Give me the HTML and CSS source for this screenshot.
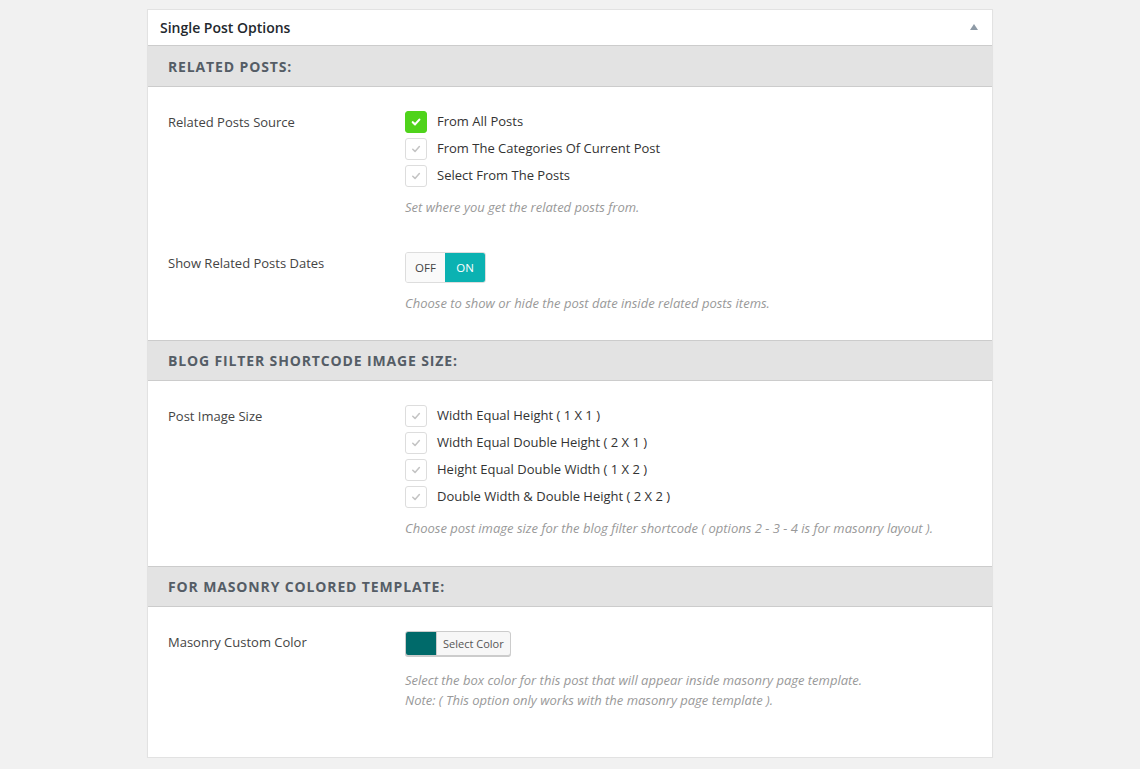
FILE: index.html
```html
<!DOCTYPE html>
<html>
<head>
<meta charset="utf-8">
<link rel="stylesheet" href="styles.css">
</head>
<body>
<div class="panel">
  <div class="panel-head">
    <span class="panel-title">Single Post Options</span>
    <span class="caret"></span>
  </div>

  <div class="sec-head">Related Posts:</div>
  <div class="sec-body">
    <div class="row">
      <div class="label">Related Posts Source</div>
      <div class="field">
        <div class="checks">
          <div class="check on"><span class="box"><svg viewBox="0 0 10 10"><path d="M2.3 5.2 L4.2 7 L7.8 3"/></svg></span><span class="txt">From All Posts</span></div>
          <div class="check"><span class="box"><svg viewBox="0 0 10 10"><path d="M2.3 5.2 L4.2 7 L7.8 3"/></svg></span><span class="txt">From The Categories Of Current Post</span></div>
          <div class="check"><span class="box"><svg viewBox="0 0 10 10"><path d="M2.3 5.2 L4.2 7 L7.8 3"/></svg></span><span class="txt">Select From The Posts</span></div>
        </div>
        <p class="desc">Set where you get the related posts from.</p>
      </div>
    </div>
    <div class="row">
      <div class="label">Show Related Posts Dates</div>
      <div class="field">
        <div class="toggle"><span class="off">OFF</span><span class="on">ON</span></div>
        <p class="desc">Choose to show or hide the post date inside related posts items.</p>
      </div>
    </div>
  </div>

  <div class="sec-head bordered">Blog Filter Shortcode Image Size:</div>
  <div class="sec-body mid">
    <div class="row">
      <div class="label">Post Image Size</div>
      <div class="field">
        <div class="checks">
          <div class="check"><span class="box"><svg viewBox="0 0 10 10"><path d="M2.3 5.2 L4.2 7 L7.8 3"/></svg></span><span class="txt">Width Equal Height ( 1 X 1 )</span></div>
          <div class="check"><span class="box"><svg viewBox="0 0 10 10"><path d="M2.3 5.2 L4.2 7 L7.8 3"/></svg></span><span class="txt">Width Equal Double Height ( 2 X 1 )</span></div>
          <div class="check"><span class="box"><svg viewBox="0 0 10 10"><path d="M2.3 5.2 L4.2 7 L7.8 3"/></svg></span><span class="txt">Height Equal Double Width ( 1 X 2 )</span></div>
          <div class="check"><span class="box"><svg viewBox="0 0 10 10"><path d="M2.3 5.2 L4.2 7 L7.8 3"/></svg></span><span class="txt">Double Width &amp; Double Height ( 2 X 2 )</span></div>
        </div>
        <p class="desc">Choose post image size for the blog filter shortcode ( options 2 - 3 - 4 is for masonry layout ).</p>
      </div>
    </div>
  </div>

  <div class="sec-head bordered">For Masonry Colored Template:</div>
  <div class="sec-body last">
    <div class="row">
      <div class="label">Masonry Custom Color</div>
      <div class="field">
        <div class="color-btn"><span class="swatch"></span><span class="color-text">Select Color</span></div>
        <p class="desc">Select the box color for this post that will appear inside masonry page template.<br>Note: ( This option only works with the masonry page template ).</p>
      </div>
    </div>
  </div>
</div>
</body>
</html>
```

FILE: styles.css
```css
html, body {
  margin: 0;
  padding: 0;
  background: #f1f1f1;
  font-family: "Open Sans", "Noto Sans", sans-serif;
  color: #444;
}

.panel {
  width: 844px;
  margin: 9px auto 0;
  background: #fff;
  border: 1px solid #e2e2e2;
  box-shadow: 0 1px 1px rgba(0,0,0,0.04);
}

.panel-head {
  height: 35px;
  display: flex;
  align-items: center;
  justify-content: space-between;
  padding: 0 14px 0 12px;
  border-bottom: 1px solid #ccc;
}

.panel-title {
  font-size: 14px;
  font-weight: 600;
  color: #23282d;
}

.caret {
  width: 0;
  height: 0;
  border-left: 4px solid transparent;
  border-right: 4px solid transparent;
  border-bottom: 6px solid #8e9aa6;
  margin-top: -1px;
}

.sec-head {
  height: 40px;
  display: flex;
  align-items: center;
  padding-left: 20px;
  background: #e3e3e3;
  border-bottom: 1px solid #ccc;
  font-size: 14px;
  font-weight: 700;
  letter-spacing: 0.86px;
  text-transform: uppercase;
  color: #555d66;
}

.sec-head.bordered {
  border-top: 1px solid #ccc;
  height: 39px;
}

.sec-body {
  padding-bottom: 16px;
}

.sec-body.mid {
  padding-bottom: 17px;
}

.sec-body.last {
  padding-bottom: 36px;
}

.row {
  display: grid;
  grid-template-columns: 237px 1fr;
  padding: 24px 20px 11px;
}

.label {
  font-size: 13px;
  line-height: 22px;
  color: #444;
}

.checks {
  display: flex;
  flex-direction: column;
  gap: 5px;
}

.check {
  display: flex;
  align-items: center;
  height: 22px;
  font-size: 13px;
  color: #333;
}

.check .txt {
  line-height: 20px;
  padding-bottom: 2px;
}

.box {
  width: 20px;
  height: 20px;
  border: 1px solid #ddd;
  border-radius: 3px;
  background: #fff;
  margin-right: 10px;
  display: flex;
  align-items: center;
  justify-content: center;
}

.box svg {
  width: 12px;
  height: 12px;
  fill: none;
  stroke: #c4c4c4;
  stroke-width: 1.3;
  stroke-linecap: round;
  stroke-linejoin: round;
}

.check.on .box {
  background: #4fd31b;
  border-color: #4fd31b;
}

.check.on .box svg {
  stroke: #fff;
  stroke-width: 1.8;
}

.desc {
  margin: 10px 0 0;
  font-size: 13px;
  line-height: 20px;
  font-style: italic;
  color: #999;
}

.toggle {
  display: inline-flex;
  height: 29px;
  border: 1px solid #ddd;
  border-radius: 3px;
  overflow: hidden;
  font-size: 11.5px;
}

.toggle span {
  width: 40px;
  display: flex;
  align-items: center;
  justify-content: center;
}

.toggle .off {
  background: #fafafa;
  color: #444;
  width: 39px;
}

.toggle .on {
  background: #0bb2b2;
  color: #fff;
}

.color-btn {
  display: inline-flex;
  height: 23px;
  margin-bottom: 2px;
  border: 1px solid #ccc;
  border-radius: 3px;
  background: #f7f7f7;
  box-shadow: 0 1px 0 #ccc;
  overflow: hidden;
}

.swatch {
  width: 30px;
  background: #006a6a;
  border-right: 1px solid #ccc;
}

.color-text {
  display: flex;
  align-items: center;
  padding: 0 6px;
  font-size: 11px;
  color: #555;
}
```
